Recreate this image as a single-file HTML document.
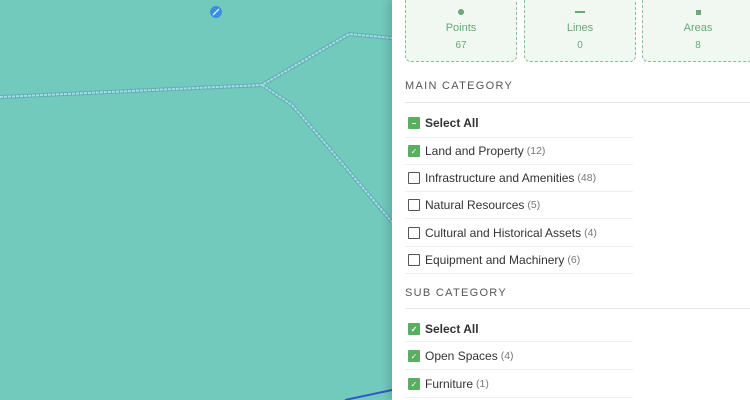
<!DOCTYPE html><html><head><style>
body{margin:0;width:750px;height:400px;overflow:hidden;font-family:"Liberation Sans",sans-serif;position:relative;background:#72cabd}
.map{position:absolute;left:0;top:0;width:392px;height:400px;background:#72cabd}
.panel{position:absolute;left:392px;top:0;width:358px;height:400px;background:#fff;box-shadow:-4px 0 8px rgba(0,0,0,.15)}
.card{position:absolute;top:-10px;height:70px;width:110px;border:1px dashed #86c08f;border-radius:6px;background:#f1f8f2;text-align:center;color:#6aa878;font-size:11px}
.card .ic{margin-top:17px;height:8px;display:flex;justify-content:center;align-items:center}
.card .l{margin-top:6px}.card .n{margin-top:6px;font-size:10px}
.h{position:absolute;left:13px;font-size:11px;letter-spacing:1.3px;color:#555}
.hl{position:absolute;left:13px;right:0;height:1px;background:#e6e6e6}
.row{position:absolute;left:16px;font-size:12px;color:#333;display:flex;align-items:center}
.cb{width:12px;height:12px;border:1px solid #555;box-sizing:border-box;margin-right:5px;border-radius:1px}
.on{background:#5aae62;border-color:#5aae62;color:#fff;font-size:8px;text-align:center;line-height:11px}
.c{color:#777;font-size:10.5px;margin-left:3px}
.sep{position:absolute;left:13px;width:228px;height:1px;background:#efefef}
</style></head><body>
<div class="map">
<svg width="392" height="400" style="position:absolute;left:0;top:0">
<g fill="none" stroke-linejoin="round">
<path d="M0 97 L262 85 L349 34 L392 38" stroke="#62aeb8" stroke-width="4"/>
<path d="M262 85 L292 105 L318 135 L392 222" stroke="#62aeb8" stroke-width="4"/>
<path d="M0 97 L262 85 L349 34 L392 38" stroke="#a6dde0" stroke-width="2" stroke-dasharray="3 1"/>
<path d="M262 85 L292 105 L318 135 L392 222" stroke="#a6dde0" stroke-width="2" stroke-dasharray="3 1"/>
</g>
<path d="M345 400 L392 390" stroke="#3456c8" stroke-width="2"/>
<circle cx="216" cy="12" r="6" fill="#3a8fe0"/><path d="M213 15 L219 9" stroke="#fff" stroke-width="1.2"/>
</svg></div>
<div class="panel">
<div class="card" style="left:13px"><div class="ic"><div style="width:6px;height:6px;border-radius:50%;background:#6aa878"></div></div><div class="l">Points</div><div class="n">67</div></div>
<div class="card" style="left:132px"><div class="ic"><div style="width:10px;height:2px;background:#6aa878"></div></div><div class="l">Lines</div><div class="n">0</div></div>
<div class="card" style="left:250px"><div class="ic"><div style="width:5px;height:5px;background:#6aa878"></div></div><div class="l">Areas</div><div class="n">8</div></div>
<div class="h" style="top:80px">MAIN CATEGORY</div><div class="hl" style="top:102px"></div>
<div class="row" style="top:116px;font-weight:bold"><div class="cb on">–</div>Select All</div><div class="sep" style="top:137px"></div>
<div class="row" style="top:144px"><div class="cb on">✓</div>Land and Property<span class="c">(12)</span></div><div class="sep" style="top:164px"></div>
<div class="row" style="top:171px"><div class="cb"></div>Infrastructure and Amenities<span class="c">(48)</span></div><div class="sep" style="top:191px"></div>
<div class="row" style="top:198px"><div class="cb"></div>Natural Resources<span class="c">(5)</span></div><div class="sep" style="top:218px"></div>
<div class="row" style="top:226px"><div class="cb"></div>Cultural and Historical Assets<span class="c">(4)</span></div><div class="sep" style="top:246px"></div>
<div class="row" style="top:253px"><div class="cb"></div>Equipment and Machinery<span class="c">(6)</span></div><div class="sep" style="top:273px"></div>
<div class="h" style="top:287px">SUB CATEGORY</div><div class="hl" style="top:308px"></div>
<div class="row" style="top:322px;font-weight:bold"><div class="cb on">✓</div>Select All</div><div class="sep" style="top:341px"></div>
<div class="row" style="top:349px"><div class="cb on">✓</div>Open Spaces<span class="c">(4)</span></div><div class="sep" style="top:369px"></div>
<div class="row" style="top:377px"><div class="cb on">✓</div>Furniture<span class="c">(1)</span></div><div class="sep" style="top:397px"></div>
</div>
</body></html>
